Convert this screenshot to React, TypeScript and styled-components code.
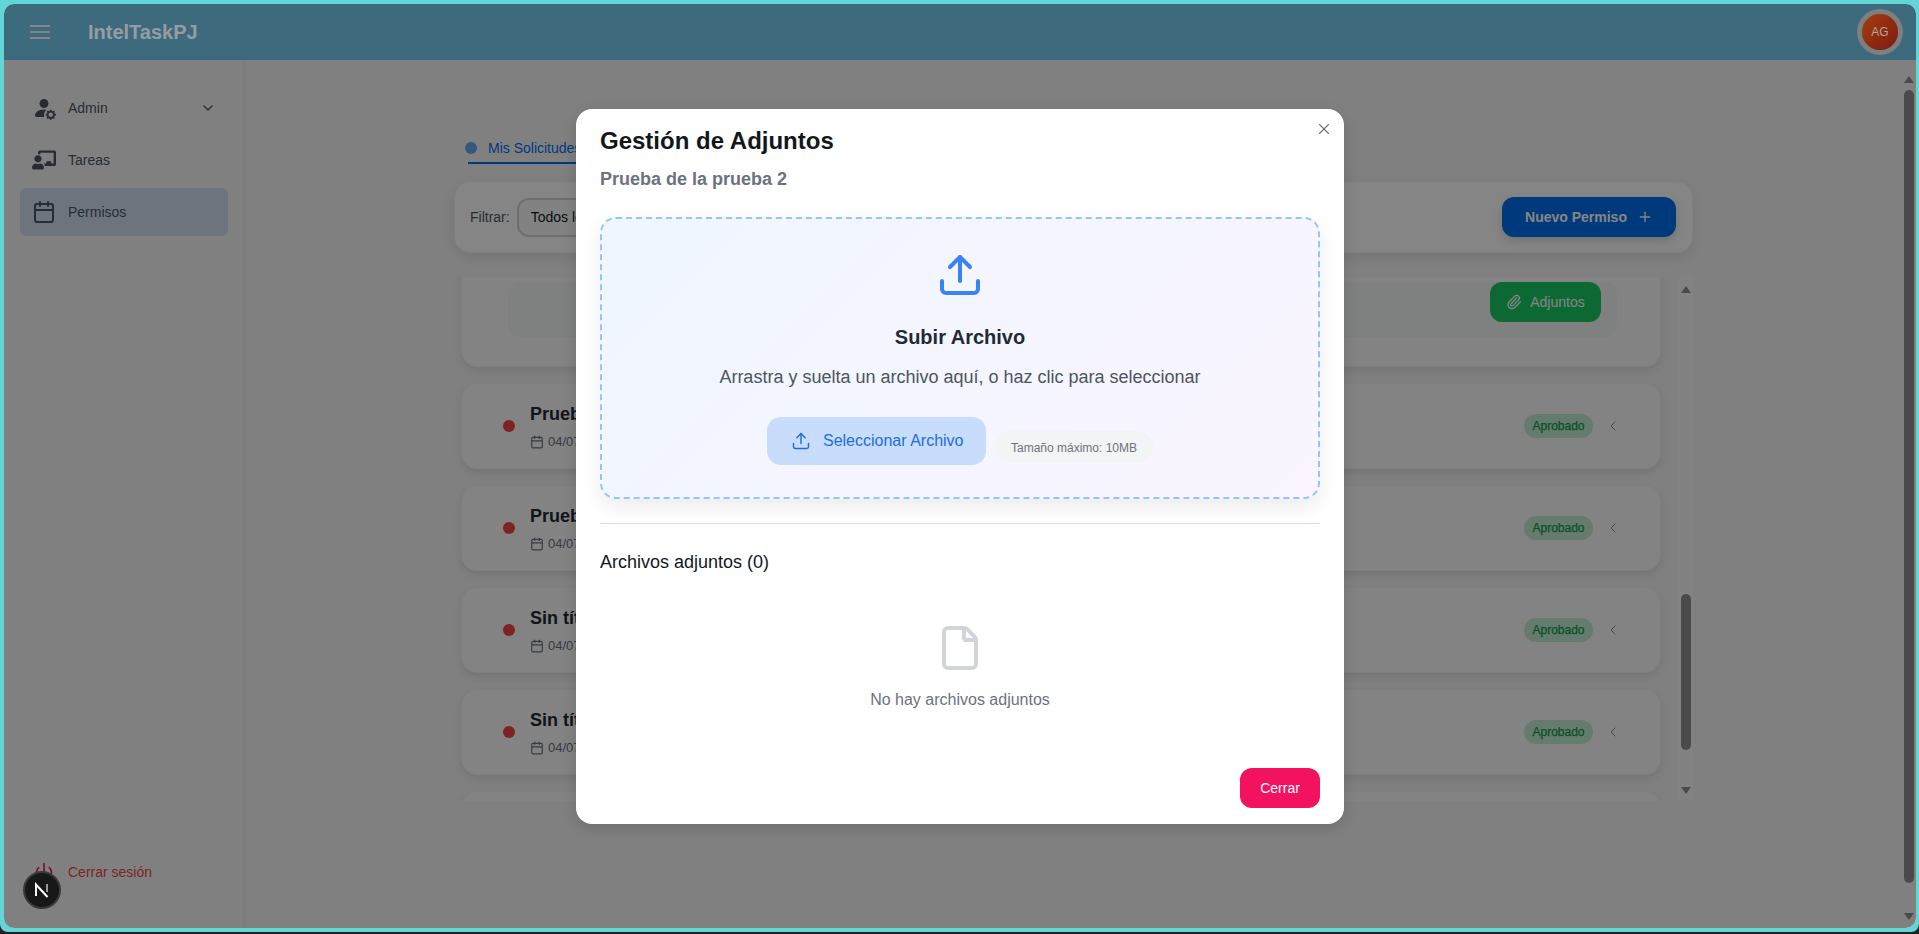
import React from 'react';
import styled, { createGlobalStyle } from 'styled-components';
import { BsPersonFillGear } from 'react-icons/bs';
import { FaChalkboardTeacher } from 'react-icons/fa';
import { Calendar, ChevronDown, ChevronLeft, File, Paperclip, Plus, Power, Upload, X } from 'lucide-react';

const GlobalStyle = createGlobalStyle`
  html, body {
    margin: 0;
    height: 100%;
    background: #222;
    overflow: hidden;
    font-family: "Liberation Sans", Arial, sans-serif;
  }
  * {
    box-sizing: border-box;
  }
`;

const requests = [
  { id: 1, title: 'Prueba de la prueba', date: '04/07/2025' },
  { id: 2, title: 'Prueba de la prueba', date: '04/07/2025' },
  { id: 3, title: 'Sin título', date: '04/07/2025' },
  { id: 4, title: 'Sin título', date: '04/07/2025' },
];

export default function App() {
  return (
    <Frame>
      <GlobalStyle />
      <Screen>
        <Header>
          <MenuIcon width="20" height="16" viewBox="0 0 20 16">
            <path d="M0 2h20M0 8h20M0 14h20" stroke="currentColor" strokeWidth="2" />
          </MenuIcon>
          <Brand>IntelTaskPJ</Brand>
          <Avatar>AG</Avatar>
        </Header>
        <Body>
          <Sidebar>
            <NavItem>
              <NavIcon><BsPersonFillGear size={24} /></NavIcon>
              Admin
              <NavChevron><ChevronDown size={16} /></NavChevron>
            </NavItem>
            <NavItem>
              <NavIcon><FaChalkboardTeacher size={24} /></NavIcon>
              Tareas
            </NavItem>
            <NavItem $active>
              <NavIcon><Calendar size={24} /></NavIcon>
              Permisos
            </NavItem>
            <Logout>
              <NavIcon $danger><Power size={20} /></NavIcon>
              Cerrar sesión
            </Logout>
          </Sidebar>
          <Main>
            <Content>
              <Tabs>
                <Tab>
                  <TabDot />
                  Mis Solicitudes
                </Tab>
              </Tabs>
              <Toolbar>
                <FilterLabel>Filtrar:</FilterLabel>
                <FilterSelect>Todos los estados</FilterSelect>
                <NewButton>
                  Nuevo Permiso
                  <Plus size={16} />
                </NewButton>
              </Toolbar>
              <ListArea>
                <ListScroll>
                  <OpenCard>
                    <OpenPanel>
                      <AttachButton>
                        <Paperclip size={16} />
                        Adjuntos
                      </AttachButton>
                    </OpenPanel>
                  </OpenCard>
                  {requests.map(item => (
                    <Card key={item.id}>
                      <StatusDot />
                      <CardText>
                        <CardTitle>{item.title}</CardTitle>
                        <CardDate>
                          <Calendar size={14} />
                          {item.date}
                        </CardDate>
                      </CardText>
                      <StatusBadge>Aprobado</StatusBadge>
                      <CardChevron><ChevronLeft size={16} strokeWidth={1.5} /></CardChevron>
                    </Card>
                  ))}
                  <Card />
                </ListScroll>
                <ScrollTrack $padTop={9} $width={15} $tint="#f9f9f9">
                  <ArrowUp />
                  <Thumb $offset={301} $length={156} />
                  <ArrowDown $offset={37} />
                </ScrollTrack>
              </ListArea>
            </Content>
          </Main>
          <ScrollTrack $padTop={16} $width={15} $tint="#f6f6f6">
            <ArrowUp />
            <Thumb $offset={7} $length={793} />
            <ArrowDown $offset={30} />
          </ScrollTrack>
        </Body>

        <Backdrop>
          <Modal>
            <CloseButton><X size={18} strokeWidth={1.5} /></CloseButton>
            <ModalTitle>Gestión de Adjuntos</ModalTitle>
            <ModalSubtitle>Prueba de la prueba 2</ModalSubtitle>
            <DropZone>
              <DropIcon><Upload size={48} /></DropIcon>
              <DropTitle>Subir Archivo</DropTitle>
              <DropHint>Arrastra y suelta un archivo aquí, o haz clic para seleccionar</DropHint>
              <DropActions>
                <PickButton>
                  <Upload size={20} strokeWidth={1.75} />
                  Seleccionar Archivo
                </PickButton>
                <SizeChip>Tamaño máximo: 10MB</SizeChip>
              </DropActions>
            </DropZone>
            <Divider />
            <FilesTitle>Archivos adjuntos (0)</FilesTitle>
            <EmptyState>
              <EmptyIcon><File size={48} /></EmptyIcon>
              <EmptyText>No hay archivos adjuntos</EmptyText>
            </EmptyState>
            <ModalFooter>
              <CloseAction>Cerrar</CloseAction>
            </ModalFooter>
          </Modal>
        </Backdrop>
        <DevBadge>
          <svg width="16" height="16" viewBox="0 0 16 16" fill="none">
            <path d="M2 14V2.5L13.5 15" stroke="#fff" strokeWidth="2" />
            <path d="M13 2v8" stroke="#bbb" strokeWidth="1.6" />
          </svg>
        </DevBadge>
      </Screen>
    </Frame>
  );
}

const Frame = styled.div`
  width: 100%;
  height: 932px;
  background: #62d6d6;
  padding: 4px 3px 4px 4px;
  border-radius: 0 0 8px 8px;
`;

const Screen = styled.div`
  position: relative;
  display: flex;
  flex-direction: column;
  height: 100%;
  background: #f6f6f6;
  border-radius: 10px;
  overflow: hidden;
`;

const Header = styled.header`
  flex: 0 0 56px;
  display: flex;
  align-items: center;
  padding: 0 18px 0 26px;
  background: #78cbf0;
`;

const MenuIcon = styled.svg`
  color: #fff;
  margin-right: 38px;
`;

const Brand = styled.div`
  position: relative;
  z-index: 60;
  font-size: 20px;
  font-weight: 700;
  color: #969da2;
`;

const Avatar = styled.div`
  position: relative;
  z-index: 60;
  display: flex;
  align-items: center;
  justify-content: center;
  width: 36px;
  height: 36px;
  margin-left: auto;
  border-radius: 50%;
  font-size: 12px;
  color: #b5a89f;
  background: linear-gradient(135deg, #a53e10, #7d1a10);
  box-shadow: 0 0 0 5px #7f7f7f;
`;

const Body = styled.div`
  flex: 1;
  display: flex;
  min-height: 0;
`;

const Sidebar = styled.aside`
  flex: 0 0 240px;
  display: flex;
  flex-direction: column;
  gap: 4px;
  padding: 24px 15px 36px 16px;
  border-right: 1px solid #ececec;
  box-shadow: 2px 0 6px rgba(0, 0, 0, 0.03);
`;

const NavItem = styled.div<{ $active?: boolean }>`
  display: flex;
  align-items: center;
  gap: 12px;
  height: 48px;
  padding: 0 12px;
  border-radius: 6px;
  font-size: 14px;
  color: #4b5563;
  background: ${props => (props.$active ? '#d4dfee' : 'transparent')};
`;

const NavIcon = styled.span<{ $danger?: boolean }>`
  display: flex;
  align-items: center;
  justify-content: center;
  width: 24px;
  height: 24px;
  color: ${props => (props.$danger ? '#f31260' : '#4b5563')};
`;

const NavChevron = styled.span`
  display: flex;
  margin-left: auto;
`;

const Logout = styled(NavItem)`
  height: 40px;
  margin-top: auto;
  color: #ef4444;
`;

const Main = styled.main`
  flex: 1;
  display: flex;
  justify-content: center;
  min-width: 0;
  padding: 0 0 0 3px;
`;

const Content = styled.div`
  width: 1240px;
  padding-top: 68px;
`;

const Tabs = styled.div`
  display: flex;
  padding-left: 14px;
`;

const Tab = styled.div`
  position: relative;
  height: 36px;
  padding: 0 24px 0 20px;
  line-height: 41px;
  font-size: 14px;
  color: #006fee;
  border-bottom: 2px solid #006fee;
`;

const TabDot = styled.span`
  position: absolute;
  left: -3px;
  top: 14px;
  width: 12px;
  height: 12px;
  border-radius: 50%;
  background: #6aa5f0;
`;

const Toolbar = styled.div`
  display: flex;
  align-items: center;
  height: 72px;
  margin: 17px 1px 24px 0;
  padding: 0 16px 0 15px;
  background: #fff;
  border: 1px solid #f3f4f6;
  border-radius: 16px;
  box-shadow: 0 4px 14px rgba(0, 0, 0, 0.1);
`;

const FilterLabel = styled.span`
  margin-right: 7px;
  font-size: 14px;
  color: #4b5563;
`;

const FilterSelect = styled.div`
  display: flex;
  align-items: center;
  width: 200px;
  height: 39px;
  padding: 0 12px;
  font-size: 14px;
  color: #111827;
  background: #f9fafb;
  border: 2px solid #d4d4d8;
  border-radius: 12px;
`;

const NewButton = styled.div`
  display: flex;
  align-items: center;
  justify-content: center;
  gap: 10px;
  width: 174px;
  height: 40px;
  margin-left: auto;
  font-size: 14px;
  font-weight: 700;
  color: #fff;
  background: #006fee;
  border-radius: 12px;
  box-shadow: 0 4px 10px rgba(0, 0, 0, 0.15);
`;

const ListArea = styled.div`
  display: flex;
  height: 524px;
  padding-right: 1px;
  overflow: hidden;
`;

const ListScroll = styled.div`
  flex: 1;
  display: flex;
  flex-direction: column;
  gap: 16px;
  padding: 0 17px 0 7px;
  overflow: hidden;
`;

const Card = styled.div`
  flex: 0 0 86px;
  display: flex;
  align-items: center;
  padding: 0 39px 0 41px;
  background: #fbfbfb;
  border: 1px solid #f3f4f6;
  border-radius: 16px;
  box-shadow: 0 4px 10px rgba(0, 0, 0, 0.1);
`;

const OpenCard = styled(Card)`
  flex: 0 0 200px;
  align-items: flex-end;
  margin-top: -110px;
  padding: 0 43px 29px 46px;
`;

const OpenPanel = styled.div`
  flex: 1;
  display: flex;
  justify-content: flex-end;
  padding: 0 16px 15px;
  background: #f3f8f5;
  border-radius: 12px;
`;

const AttachButton = styled.div`
  display: flex;
  align-items: center;
  justify-content: center;
  gap: 8px;
  width: 111px;
  height: 40px;
  font-size: 14px;
  color: #fff;
  background: #17c964;
  border-radius: 12px;
`;

const StatusDot = styled.span`
  flex: 0 0 12px;
  height: 12px;
  border-radius: 50%;
  background: #ef4444;
`;

const CardText = styled.div`
  flex: 1;
  display: flex;
  flex-direction: column;
  gap: 9px;
  margin-left: 15px;
`;

const CardTitle = styled.div`
  font-size: 18px;
  font-weight: 700;
  line-height: 22px;
  color: #1f2937;
`;

const CardDate = styled.div`
  display: flex;
  align-items: center;
  gap: 4px;
  font-size: 13px;
  color: #6b7280;
`;

const StatusBadge = styled.span`
  display: flex;
  align-items: center;
  justify-content: center;
  width: 69px;
  height: 24px;
  border-radius: 12px;
  font-size: 12px;
  color: #0f9a4a;
  -webkit-text-stroke: 0.25px #0f9a4a;
  background: #c2ecd3;
`;

const CardChevron = styled.span`
  display: flex;
  margin-left: 12px;
  color: #8a8a92;
`;

const ScrollTrack = styled.div<{ $padTop: number; $width: number; $tint: string }>`
  flex: 0 0 ${props => props.$width}px;
  display: flex;
  flex-direction: column;
  align-items: center;
  padding-top: ${props => props.$padTop}px;
  background: ${props => props.$tint};
`;

const ArrowUp = styled.span`
  width: 0;
  height: 0;
  border-left: 5px solid transparent;
  border-right: 5px solid transparent;
  border-bottom: 7px solid #8f8f8f;
`;

const ArrowDown = styled.span<{ $offset: number }>`
  width: 0;
  height: 0;
  margin-top: ${props => props.$offset}px;
  border-left: 5px solid transparent;
  border-right: 5px solid transparent;
  border-top: 7px solid #8f8f8f;
`;

const Thumb = styled.span<{ $offset: number; $length: number }>`
  flex: 0 0 ${props => props.$length}px;
  width: 10px;
  margin-top: ${props => props.$offset}px;
  border-radius: 5px;
  background: #8f8f8f;
`;

const Backdrop = styled.div`
  position: absolute;
  inset: 0;
  z-index: 50;
  display: flex;
  align-items: center;
  justify-content: center;
  background: rgba(0, 0, 0, 0.48);
`;

const Modal = styled.div`
  position: relative;
  width: 768px;
  margin-top: 1px;
  padding: 16px 24px;
  background: #fff;
  border-radius: 16px;
  box-shadow: 0 4px 14px rgba(0, 0, 0, 0.15);
`;

const CloseButton = styled.span`
  position: absolute;
  top: 11px;
  right: 11px;
  display: flex;
  color: #71717a;
`;

const ModalTitle = styled.div`
  font-size: 24px;
  font-weight: 700;
  line-height: 32px;
  color: #11181c;
`;

const ModalSubtitle = styled.div`
  margin-top: 8px;
  font-size: 18px;
  font-weight: 700;
  line-height: 28px;
  color: #6b7280;
`;

const DropZone = styled.div`
  display: flex;
  flex-direction: column;
  align-items: center;
  height: 282px;
  margin-top: 24px;
  padding-top: 32px;
  background: linear-gradient(135deg, #eff6ff, #faf5ff);
  border: 2px dashed #93c5fd;
  border-radius: 16px;
  box-shadow: 0 8px 20px rgba(0, 0, 0, 0.08);
`;

const DropIcon = styled.span`
  display: flex;
  color: #3b82f6;
`;

const DropTitle = styled.div`
  margin-top: 24px;
  font-size: 20px;
  font-weight: 700;
  line-height: 28px;
  color: #1f2937;
`;

const DropHint = styled.div`
  margin-top: 14px;
  font-size: 18px;
  line-height: 24px;
  color: #4b5563;
`;

const DropActions = styled.div`
  display: flex;
  align-items: flex-end;
  gap: 9px;
  margin-top: 28px;
`;

const PickButton = styled.div`
  display: flex;
  align-items: center;
  gap: 12px;
  width: 219px;
  height: 48px;
  padding-left: 24px;
  font-size: 16px;
  white-space: nowrap;
  color: #1a6fe0;
  background: #c8dcfb;
  border-radius: 14px;
`;

const SizeChip = styled.span`
  display: flex;
  align-items: center;
  height: 32px;
  margin-bottom: 2px;
  padding: 2px 16px 0;
  font-size: 12px;
  color: #71717a;
  background: #f3f4f6;
  border-radius: 16px;
`;

const Divider = styled.div`
  height: 1px;
  margin-top: 24px;
  background: #dcdcdf;
`;

const FilesTitle = styled.div`
  margin-top: 24px;
  font-size: 18px;
  line-height: 28px;
  color: #11181c;
`;

const EmptyState = styled.div`
  display: flex;
  flex-direction: column;
  align-items: center;
  margin-top: 48px;
`;

const EmptyIcon = styled.span`
  display: flex;
  color: #d1d5db;
`;

const EmptyText = styled.div`
  margin-top: 16px;
  font-size: 16px;
  line-height: 24px;
  color: #6b7280;
`;

const ModalFooter = styled.div`
  display: flex;
  justify-content: flex-end;
  margin-top: 56px;
`;

const CloseAction = styled.div`
  display: flex;
  align-items: center;
  justify-content: center;
  width: 80px;
  height: 40px;
  font-size: 14px;
  color: #fff;
  background: #f31260;
  border-radius: 12px;
`;

const DevBadge = styled.div`
  position: absolute;
  left: 19px;
  bottom: 19px;
  z-index: 70;
  display: flex;
  align-items: center;
  justify-content: center;
  width: 38px;
  height: 38px;
  border-radius: 50%;
  background: #171717;
  border: 2px solid #3a3a3a;
`;
